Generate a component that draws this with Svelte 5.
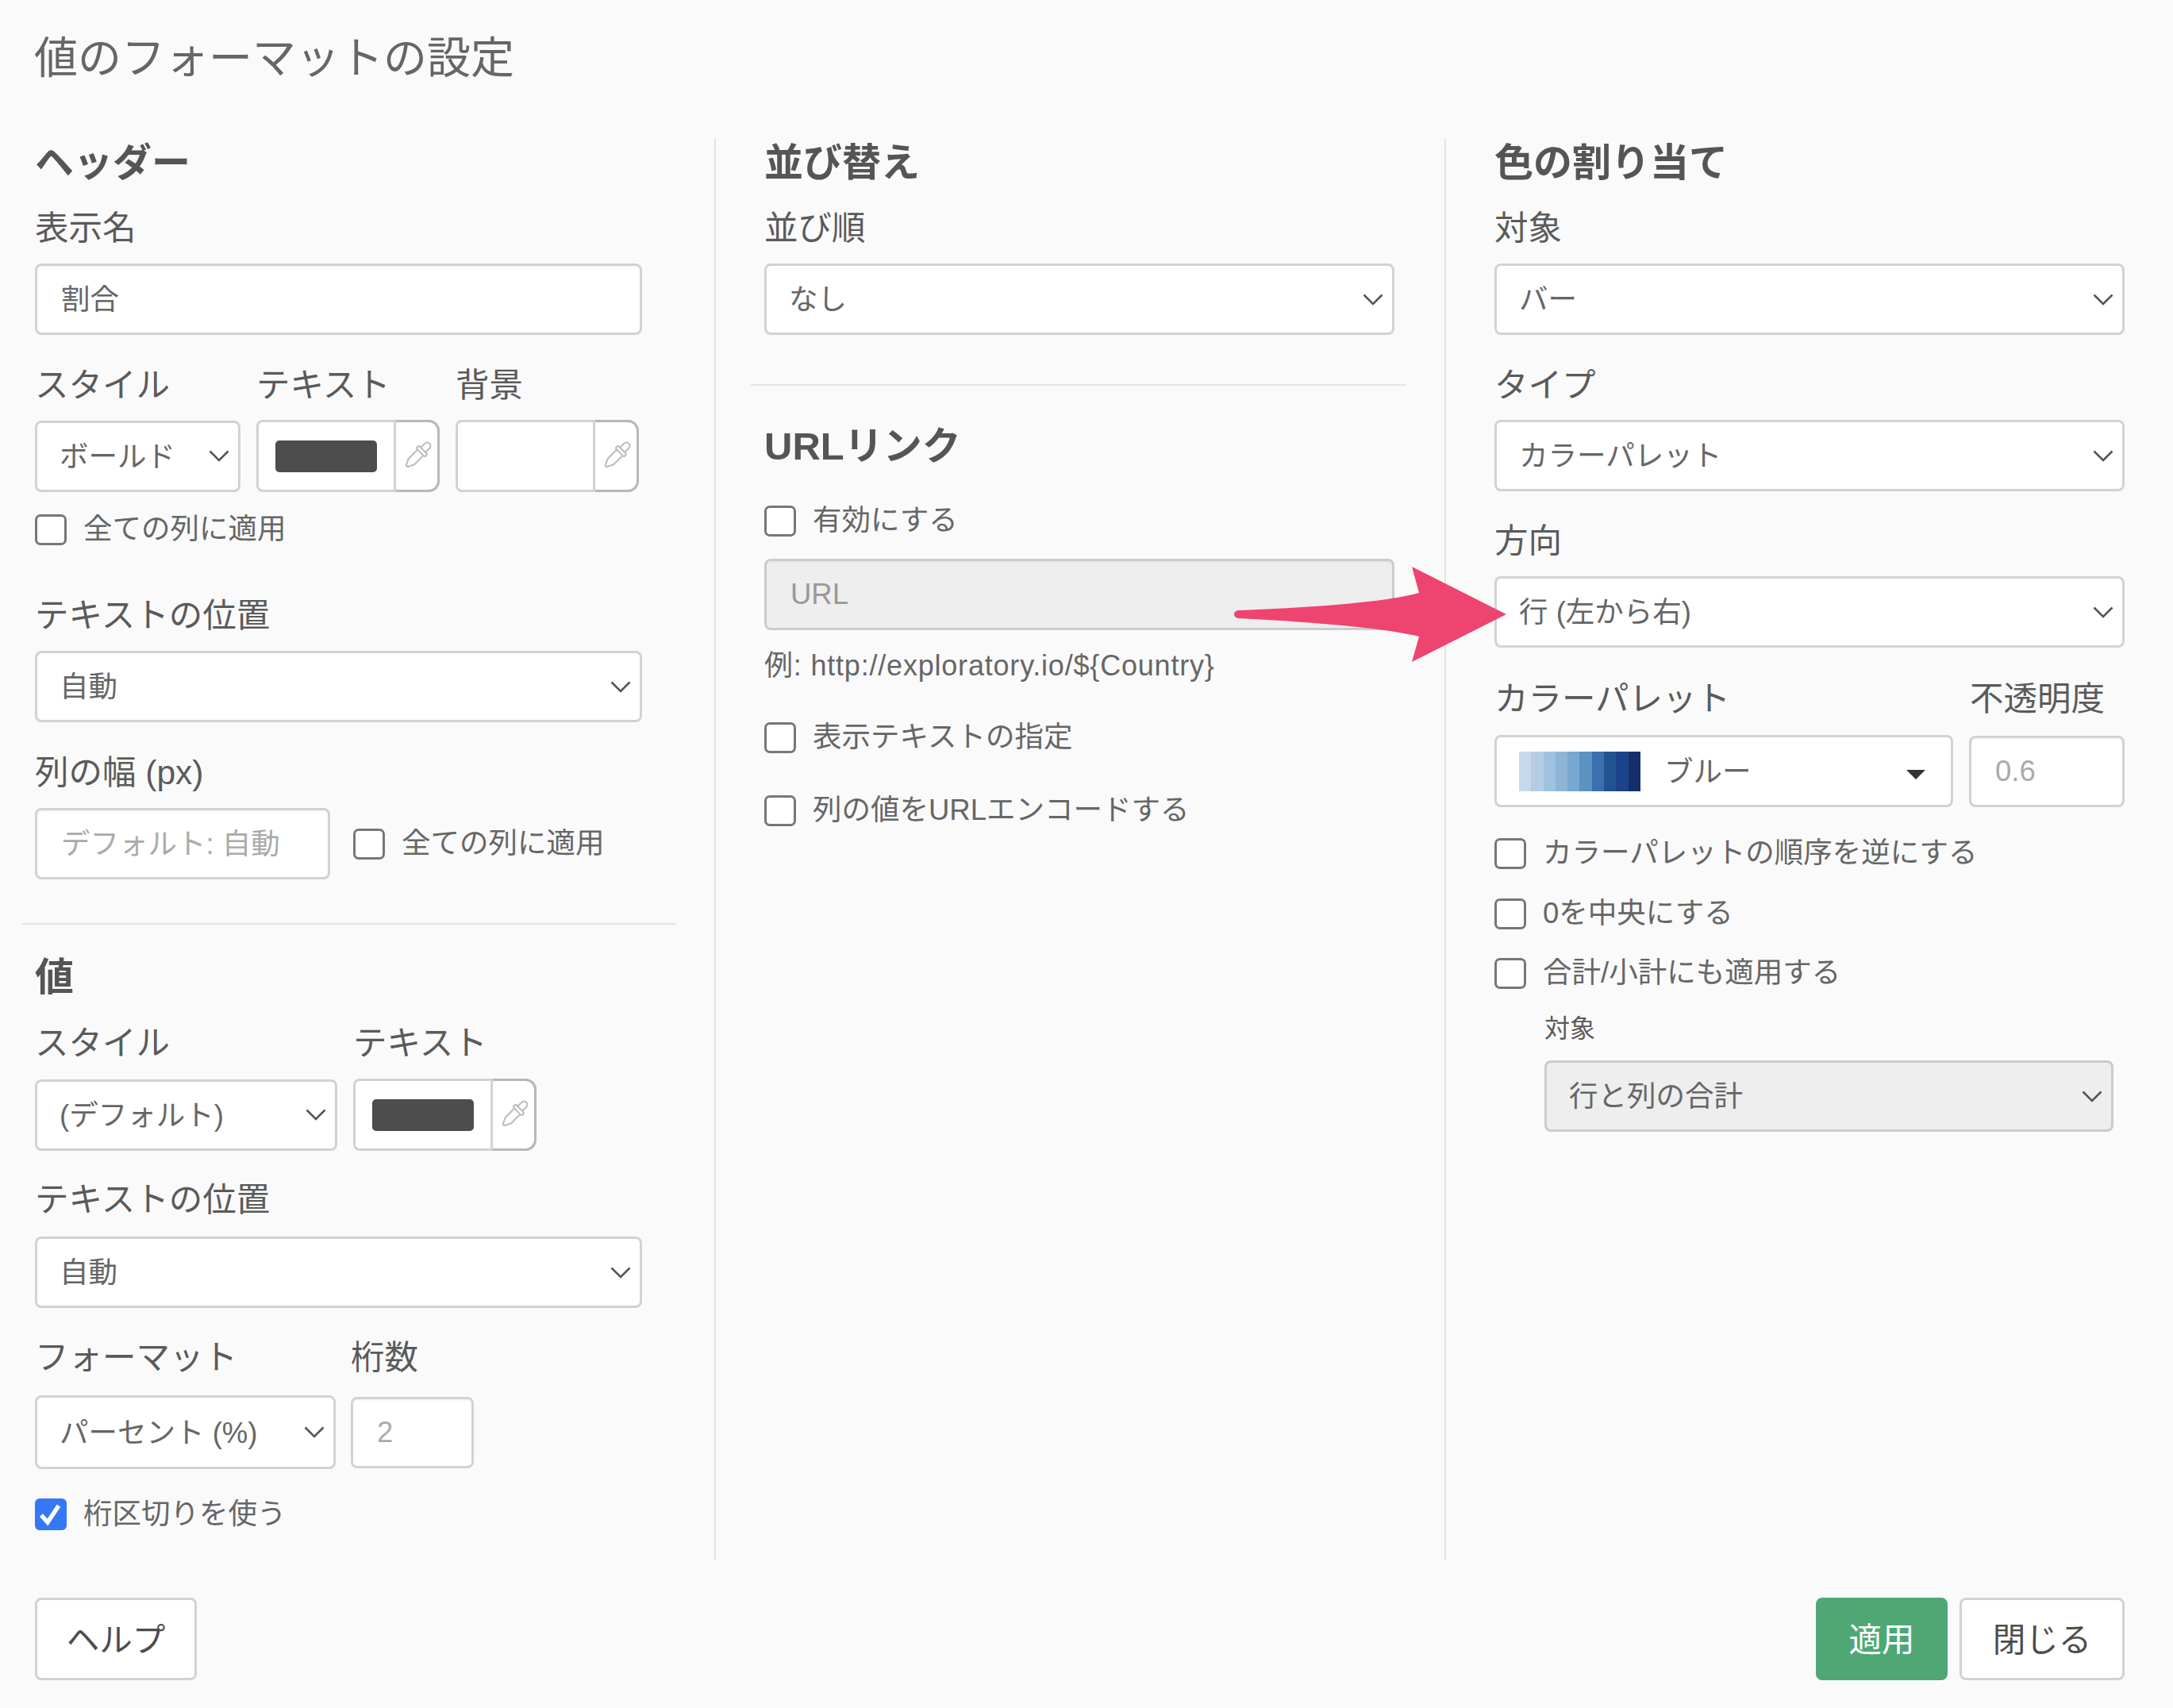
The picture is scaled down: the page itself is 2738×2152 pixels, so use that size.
<script lang="ts">
	const ramp = ['#c6d9ec', '#b5cde4', '#9fc3de', '#8fb5d6', '#78a8d0', '#5a93c0', '#3a6fb0', '#20538f', '#1c4389', '#142f6b'];
</script>

{#snippet chevron()}
	<svg class="chevron" viewBox="0 0 26 15" width="26" height="15" aria-hidden="true">
		<path d="M1.5 1.5 L13 13 L24.5 1.5" fill="none" stroke="#555" stroke-width="2.6" />
	</svg>
{/snippet}

{#snippet select(text, cls = '')}
	<div class="select {cls}">
		<span>{text}</span>
		{@render chevron()}
	</div>
{/snippet}

{#snippet check(text, cls = '')}
	<div class="check {cls}">
		<span class="box"></span>
		<span>{text}</span>
	</div>
{/snippet}

{#snippet color(swatch)}
	<div class="color">
		<div class="color-main">
			{#if swatch}<span class="swatch"></span>{/if}
		</div>
		<div class="color-pick">
			<svg viewBox="-24 -24 48 48" width="50" height="50" aria-hidden="true">
				<g transform="rotate(45)" fill="none" stroke="#bdbdbd" stroke-width="2" stroke-linejoin="round">
					<path d="M-4 -11 V-18 a4 4 0 0 1 8 0 V-11" />
					<rect x="-7.5" y="-11" width="15" height="4.5" rx="2.2" />
					<path d="M-5 -6.5 V9 L-1.5 16 a1.6 1.6 0 0 0 3 0 L5 9 V-6.5" />
				</g>
			</svg>
		</div>
	</div>
{/snippet}

<div class="page">
	<h1>値のフォーマットの設定</h1>

	<div class="columns">
		<section class="col first">
			<h2>ヘッダー</h2>
			<div class="label g30">表示名</div>
			<div class="input g21 value">割合</div>

			<div class="row labels g37">
				<div class="label w-style">スタイル</div>
				<div class="label w-text">テキスト</div>
				<div class="label">背景</div>
			</div>
			<div class="row colors g20">
				{@render select('ボールド', 'w-259 tight')}
				{@render color(true)}
				{@render color(false)}
			</div>
			{@render check('全ての列に適用', 'g27')}

			<div class="label g62">テキストの位置</div>
			{@render select('自動', 'g21')}

			<div class="label g37">列の幅 (px)</div>
			<div class="row width g21">
				<div class="input placeholder w-372">デフォルト: 自動</div>
				{@render check('全ての列に適用')}
			</div>

			<hr class="rule-left" />

			<h2 class="g38">値</h2>
			<div class="row labels g29">
				<div class="label w-style2">スタイル</div>
				<div class="label">テキスト</div>
			</div>
			<div class="row colors2 g21">
				{@render select('(デフォルト)', 'w-381 tight')}
				{@render color(true)}
			</div>

			<div class="label g35">テキストの位置</div>
			{@render select('自動', 'g23')}

			<div class="row labels g36">
				<div class="label w-format">フォーマット</div>
				<div class="label">桁数</div>
			</div>
			<div class="row format g24">
				{@render select('パーセント (%)', 'w-379 tall tight')}
				<div class="input placeholder latin w-155">2</div>
			</div>
			<div class="check checked g37">
				<span class="box">
					<svg viewBox="0 0 40 40" width="40" height="40" aria-hidden="true">
						<path d="M8 21 L16 30 L30 9" fill="none" stroke="#fff" stroke-width="5.5" />
					</svg>
				</span>
				<span>桁区切りを使う</span>
			</div>
		</section>

		<section class="col mid">
			<h2>並び替え</h2>
			<div class="label g30">並び順</div>
			{@render select('なし', 'g21')}
			<hr class="rule-mid" />

			<h2 class="g48">URLリンク</h2>
			{@render check('有効にする', 'g46')}
			<div class="input disabled latin url g28">URL</div>
			<div class="hint g25">例: http://exploratory.io/$&#123;Country&#125;</div>
			{@render check('表示テキストの指定', 'g50')}
			{@render check('列の値をURLエンコードする', 'g52')}
		</section>

		<section class="col">
			<h2>色の割り当て</h2>
			<div class="label g30">対象</div>
			{@render select('バー', 'g21')}

			<div class="label g37">タイプ</div>
			{@render select('カラーパレット', 'g20')}

			<div class="label g36">方向</div>
			{@render select('行 (左から右)', 'g21')}

			<div class="row labels g38">
				<div class="label w-palette">カラーパレット</div>
				<div class="label">不透明度</div>
			</div>
			<div class="row palette-row g22">
				<div class="palette">
					<div class="ramp">
						{#each ramp as c}
							<span style={`background: ${c}`}></span>
						{/each}
					</div>
					<span class="palette-name">ブルー</span>
					<span class="caret"></span>
				</div>
				<div class="input placeholder latin opacity">0.6</div>
			</div>
			{@render check('カラーパレットの順序を逆にする', 'g38')}
			{@render check('0を中央にする', 'g36')}
			{@render check('合計/小計にも適用する', 'g35')}

			<div class="indent">
				<div class="small g30">対象</div>
				{@render select('行と列の合計', 'g20 disabled')}
			</div>
		</section>
	</div>

	<footer>
		<button class="btn help">ヘルプ</button>
		<div class="actions">
			<button class="btn apply">適用</button>
			<button class="btn close">閉じる</button>
		</div>
	</footer>

	<svg class="arrow" width="2738" height="2152" viewBox="0 0 2738 2152" aria-hidden="true">
		<path
			d="M1560 769 C1640 766 1740 760 1788 747 L1779 714 L1898 774 L1779 834 L1788 802 C1740 790 1640 783 1560 779 Q1555 778 1555 774 Q1555 770 1560 769 Z"
			fill="#ee4470"
		/>
	</svg>
</div>

<style>
	:global(body) {
		background: #fafafa;
	}

	* {
		box-sizing: border-box;
	}

	.page {
		height: 2152px;
		overflow: hidden;
		position: relative;
		background: #fafafa;
		color: #5a5a5a;
		font-family: "Liberation Sans", "Noto Sans CJK JP", sans-serif;
		font-weight: 400;
	}

	h1 {
		margin: 0;
		padding: 43px 0 0 43px;
		height: 175px;
		font-size: 55px;
		line-height: 60px;
		font-weight: 400;
		color: #666;
	}

	.columns {
		display: grid;
		grid-template-columns: 900px 920px 918px;
		height: 1791px;
	}

	.col {
		display: flex;
		flex-direction: column;
		padding: 0 61px 0 61px;
		border-left: 2px solid #e4e4e4;
	}

	.col.first {
		border-left: 0;
		padding: 0 91px 0 44px;
	}

	.col.mid {
		padding-right: 63px;
	}

	h2 {
		margin: 0;
		height: 56px;
		font-size: 49px;
		line-height: 56px;
		font-weight: 700;
		color: #555;
	}

	h2:first-child {
		line-height: 61px;
	}

	.label {
		height: 50px;
		font-size: 42.5px;
		line-height: 53px;
		white-space: nowrap;
	}

	.small {
		font-size: 32px;
		line-height: 40px;
	}

	.row {
		display: flex;
		align-items: center;
	}

	.labels {
		align-items: flex-start;
	}

	.input,
	.select,
	.palette,
	.color,
	.btn {
		border: 3px solid #d2d2d2;
		border-radius: 8px;
		background: #fff;
	}

	.input {
		height: 90px;
		display: flex;
		align-items: center;
		padding: 0 0 5px 30px;
		font-size: 36.5px;
		color: #666;
		box-shadow: inset 0 2px 2px rgba(0, 0, 0, 0.04);
	}

	.input.latin {
		padding-bottom: 0;
	}

	.input.placeholder {
		color: #aaa;
	}

	.input.disabled {
		background: #eee;
		color: #999;
		border-color: #ccc;
	}

	.select {
		height: 90px;
		display: flex;
		align-items: center;
		justify-content: space-between;
		padding: 0 11px 0 28px;
		font-size: 36.5px;
		color: #666;
		white-space: nowrap;
	}

	.select > span {
		padding-bottom: 5px;
	}

	.select.disabled {
		background: #eee;
		border-color: #ccc;
	}

	.tall {
		height: 93px;
	}

	.chevron {
		flex: none;
	}

	.check {
		display: flex;
		align-items: center;
		gap: 21px;
		font-size: 36.5px;
		line-height: 40px;
		color: #666;
		white-space: nowrap;
	}

	.box {
		flex: none;
		width: 40px;
		height: 39px;
		border: 3px solid #777;
		border-radius: 7px;
		background: #fff;
	}

	.checked .box {
		width: 40px;
		height: 40px;
		border: 0;
		background: #3478f6;
		border-radius: 6px;
	}

	.checked svg {
		display: block;
	}

	.color {
		width: 231px;
		height: 91px;
		display: flex;
		flex: none;
		border-radius: 8px 14px 14px 8px;
	}

	.color-main {
		width: 173px;
		display: flex;
		align-items: center;
		padding-left: 21px;
		border-right: 3px solid #d2d2d2;
	}

	.swatch {
		width: 128px;
		height: 40px;
		background: #4d4d4d;
		border-radius: 5px;
	}

	.color-pick {
		flex: 1;
		display: flex;
		align-items: center;
		justify-content: center;
		margin: -3px -3px -3px 0;
		border: 3px solid #b8b8b8;
		border-left: 0;
		border-radius: 0 14px 14px 0;
	}

	.w-style { width: 279px; }
	.w-text { width: 251px; }
	.w-style2 { width: 401px; }
	.w-format { width: 398px; }
	.w-palette { width: 599px; }

	.w-259 { width: 259px; flex: none; }
	.w-372 { width: 372px; flex: none; }
	.w-381 { width: 381px; flex: none; }
	.w-379 { width: 379px; flex: none; }
	.w-155 { width: 155px; flex: none; }

	.colors { gap: 20px; }
	.colors2 { gap: 20px; }
	.width { gap: 29px; }
	.format { gap: 19px; }
	.palette-row { gap: 20px; }

	.hint {
		font-size: 36px;
		line-height: 40px;
		letter-spacing: 0.8px;
		color: #666;
		white-space: nowrap;
	}

	hr {
		height: 2px;
		border: 0;
		margin: 0;
		background: #e4e4e4;
		flex: none;
	}

	.rule-left {
		margin: 55px -43px 0 -16px;
	}

	.rule-mid {
		margin: 62px -15px 0 -17px;
	}

	.palette {
		width: 578px;
		height: 91px;
		flex: none;
		display: flex;
		align-items: center;
		padding-left: 28px;
		font-size: 36.5px;
		color: #666;
	}

	.ramp {
		display: flex;
		width: 153px;
		height: 50px;
		flex: none;
	}

	.ramp span {
		flex: 1;
	}

	.palette-name {
		margin-left: 30px;
		padding-bottom: 5px;
	}

	.caret {
		margin-left: auto;
		margin-right: 32px;
		margin-top: 8px;
		border-top: 12px solid #333;
		border-left: 12px solid transparent;
		border-right: 12px solid transparent;
	}

	.opacity {
		width: 196px;
		height: 90px;
		flex: none;
		padding-left: 30px;
	}

	.indent {
		display: flex;
		flex-direction: column;
		padding-left: 63px;
		margin-right: 14px;
	}

	footer {
		display: flex;
		justify-content: space-between;
		padding: 47px 61px 0 44px;
	}

	.actions {
		display: flex;
		gap: 15px;
	}

	.btn {
		height: 104px;
		font: inherit;
		font-size: 41.5px;
		color: #4d4d4d;
		padding: 0 0 5px;
	}

	.help {
		width: 204px;
	}

	.apply {
		width: 166px;
		background: #4fa874;
		border-color: #4fa874;
		color: #fff;
	}

	.close {
		width: 208px;
	}

	.arrow {
		position: absolute;
		left: 0;
		top: 0;
		pointer-events: none;
	}

	.g20 { margin-top: 20px; }
	.g21 { margin-top: 21px; }
	.g22 { margin-top: 22px; }
	.g23 { margin-top: 23px; }
	.g24 { margin-top: 24px; }
	.g25 { margin-top: 25px; }
	.g27 { margin-top: 27px; }
	.g28 { margin-top: 28px; }
	.g29 { margin-top: 29px; }
	.g30 { margin-top: 30px; }
	.g35 { margin-top: 35px; }
	.g36 { margin-top: 36px; }
	.g37 { margin-top: 37px; }
	.g38 { margin-top: 38px; }
	.g46 { margin-top: 46px; }
	.g48 { margin-top: 48px; }
	.g50 { margin-top: 50px; }
	.g52 { margin-top: 52px; }
	.g62 { margin-top: 62px; }
</style>
